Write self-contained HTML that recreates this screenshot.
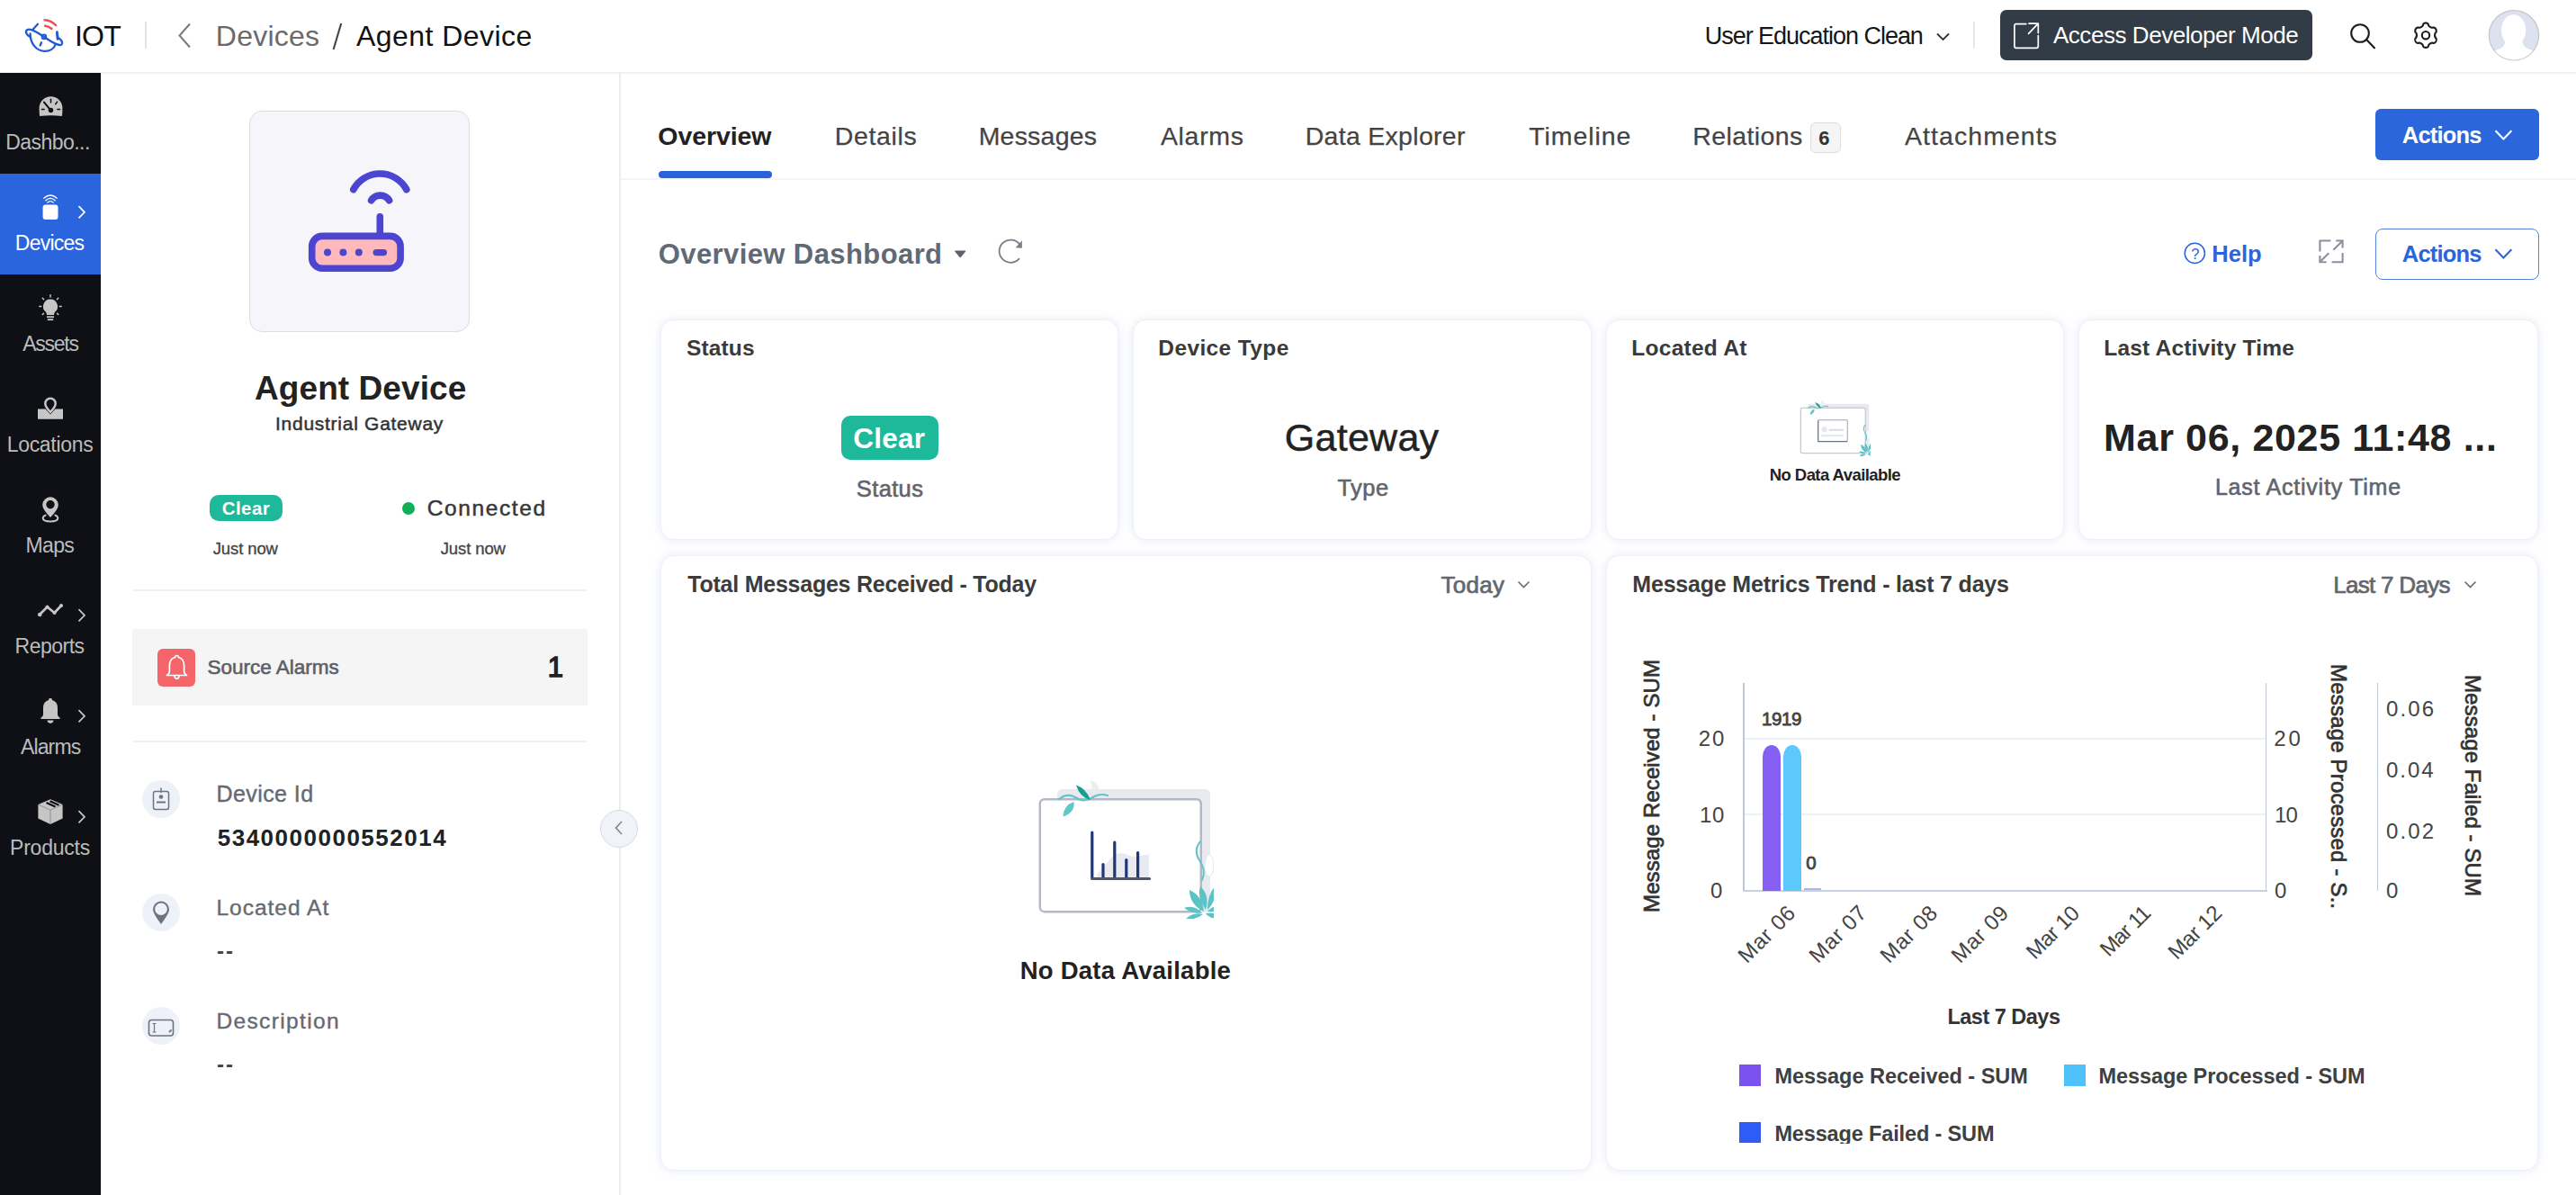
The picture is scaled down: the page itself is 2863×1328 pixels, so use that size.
<!DOCTYPE html>
<html><head><meta charset="utf-8"><title>IOT - Agent Device</title>
<style>
html,body{margin:0;padding:0;}
body{width:2863px;height:1328px;overflow:hidden;background:#fff;font-family:"Liberation Sans",sans-serif;position:relative;}
.a{position:absolute;box-sizing:border-box;}
.t{position:absolute;white-space:nowrap;line-height:1;font-family:"Liberation Sans",sans-serif;}
svg{position:absolute;overflow:visible;}
.card{position:absolute;box-sizing:border-box;background:#fff;border:1px solid #eef1f7;border-radius:15px;box-shadow:0 0 10px 1px rgba(214,222,238,.55);}
</style></head><body>
<div class="a" style="left:0px;top:0px;width:2863px;height:81px;background:#fff;"></div>
<div class="a" style="left:0px;top:80px;width:2863px;height:2px;background:#f1f2f5;"></div>
<svg style="left:20px;top:10px" width="60" height="60" viewBox="0 0 60 60">
<g fill="none" stroke-linecap="round" stroke-linejoin="round">
<path d="M29.600 12.200 Q37 12.600 42 18" stroke="#f04f55" stroke-width="2.500"/>
<path d="M30.100 18.700 Q34.500 19.200 37.500 22" stroke="#f04f55" stroke-width="2.500"/>
<path d="M16.300 23 L22 16.800" stroke="#2259d6" stroke-width="2.300"/>
<path d="M45 32.300 C50 35 50.500 40.800 46 40 C40 39 33.500 33.800 28.500 30.600 C22 26.400 14 21 10.500 23 C7.300 25 9.500 28.500 12.800 30.500" stroke="#2259d6" stroke-width="2.300"/>
<path d="M13.600 27.500 C13.600 38 20 46.300 29 46.800 C35.500 47.100 40.300 43.800 41.800 38.800" stroke="#2259d6" stroke-width="2.300"/>
<path d="M43.400 25.800 L44.100 33.300" stroke="#2259d6" stroke-width="2.900"/>
<circle cx="28.900" cy="30.900" r="2.300" stroke="#2259d6" stroke-width="2"/>
<path d="M25.900 37.300 L24.700 40.500" stroke="#2259d6" stroke-width="2.300"/>
</g></svg>
<span class="t" style="left:83.04px;top:24.00px;font-size:32px;letter-spacing:-0.800px;color:#111;">IOT</span>
<div class="a" style="left:161px;top:24px;width:2px;height:30px;background:#e2e2e6;"></div>
<svg style="left:196px;top:24px" width="18" height="32" viewBox="0 0 18 32"><path d="M15 2.5 L3.5 15.5 L15 28.5" fill="none" stroke="#7a7a7f" stroke-width="2"/></svg>
<span class="t" style="left:239.86px;top:24.00px;font-size:32px;letter-spacing:0.237px;color:#6a6a6e;">Devices</span>
<svg style="left:366px;top:24px" width="18" height="34" viewBox="0 0 18 34"><path d="M13.2 2 L4.6 31" fill="none" stroke="#444" stroke-width="2.1"/></svg>
<span class="t" style="left:395.92px;top:24.00px;font-size:32px;letter-spacing:0.465px;color:#111;">Agent Device</span>
<span class="t" style="left:1894.71px;top:27.00px;font-size:27px;letter-spacing:-1.024px;color:#161616;">User Education Clean</span>
<svg style="left:2151px;top:35px" width="18" height="12" viewBox="0 0 18 12"><path d="M2 2.5 L8.5 9 L15 2.5" fill="none" stroke="#333" stroke-width="1.8"/></svg>
<div class="a" style="left:2193px;top:24px;width:2px;height:30px;background:#e8e8ec;"></div>
<div class="a" style="left:2223px;top:11px;width:347px;height:56px;background:#323c47;border-radius:7px;"></div>
<svg style="left:2237px;top:24px" width="31" height="32" viewBox="0 0 31 32"><g fill="none" stroke="#fff" stroke-width="1.700" stroke-linecap="round" stroke-linejoin="round">
<path d="M14.800 2.600 H3.800 Q1.900 2.600 1.900 4.600 V27.300 Q1.900 29.300 3.800 29.300 H26.300 Q28.300 29.300 28.300 27.300 V15.600"/>
<path d="M17.600 13.400 L27.800 2.700 M18 2.200 H28.300 V12.600"/></g></svg>
<span class="t" style="left:2281.93px;top:26.00px;font-size:26px;letter-spacing:-0.445px;color:#fff;">Access Developer Mode</span>
<svg style="left:2610px;top:23.500px" width="32" height="32" viewBox="0 0 32 32"><g fill="none" stroke="#1c1c1c" stroke-width="2.100" stroke-linecap="round"><circle cx="13" cy="13" r="9.800"/><path d="M20.300 20.300 L29 29.300"/></g></svg>
<svg style="left:2680px;top:23px" width="32" height="33" viewBox="0 0 32 33"><g fill="none" stroke="#1c1c1c" stroke-width="2.100" stroke-linejoin="round">
<path d="M26.09 16.20 L26.09 16.48 L26.11 16.76 L26.15 17.04 L26.19 17.33 L26.25 17.62 L26.33 17.92 L26.42 18.23 L26.54 18.56 L26.71 18.90 L27.15 19.34 L27.57 19.80 L27.70 20.20 L27.77 20.58 L27.79 20.96 L27.78 21.33 L27.73 21.69 L27.65 22.04 L27.55 22.39 L27.41 22.72 L27.26 23.03 L27.07 23.34 L26.87 23.62 L26.64 23.89 L26.39 24.13 L26.11 24.36 L25.81 24.56 L25.49 24.73 L25.14 24.86 L24.75 24.93 L24.16 24.78 L23.58 24.60 L23.21 24.62 L22.88 24.68 L22.58 24.75 L22.29 24.83 L22.02 24.92 L21.76 25.02 L21.52 25.13 L21.28 25.25 L21.04 25.39 L20.82 25.53 L20.60 25.69 L20.38 25.86 L20.17 26.04 L19.96 26.25 L19.75 26.47 L19.54 26.71 L19.33 26.98 L19.13 27.31 L18.99 27.92 L18.82 28.54 L18.56 28.86 L18.28 29.11 L17.98 29.32 L17.66 29.49 L17.34 29.63 L17.01 29.73 L16.68 29.81 L16.34 29.85 L16.00 29.87 L15.66 29.85 L15.32 29.81 L14.99 29.73 L14.66 29.63 L14.34 29.49 L14.02 29.32 L13.72 29.11 L13.44 28.86 L13.18 28.54 L13.01 27.92 L12.87 27.31 L12.67 26.98 L12.46 26.71 L12.25 26.47 L12.04 26.25 L11.83 26.04 L11.62 25.86 L11.40 25.69 L11.18 25.53 L10.96 25.39 L10.72 25.25 L10.48 25.13 L10.24 25.02 L9.98 24.92 L9.71 24.83 L9.42 24.75 L9.12 24.68 L8.79 24.62 L8.42 24.60 L7.84 24.78 L7.25 24.93 L6.86 24.86 L6.51 24.73 L6.19 24.56 L5.89 24.36 L5.61 24.13 L5.36 23.89 L5.13 23.62 L4.93 23.34 L4.74 23.03 L4.59 22.72 L4.45 22.39 L4.35 22.04 L4.27 21.69 L4.22 21.33 L4.21 20.96 L4.23 20.58 L4.30 20.20 L4.43 19.80 L4.85 19.34 L5.29 18.90 L5.46 18.56 L5.58 18.23 L5.67 17.92 L5.75 17.62 L5.81 17.33 L5.85 17.04 L5.89 16.76 L5.91 16.48 L5.91 16.20 L5.91 15.92 L5.89 15.64 L5.85 15.36 L5.81 15.07 L5.75 14.78 L5.67 14.48 L5.58 14.17 L5.46 13.84 L5.29 13.50 L4.85 13.06 L4.43 12.60 L4.30 12.20 L4.23 11.82 L4.21 11.44 L4.22 11.07 L4.27 10.71 L4.35 10.36 L4.45 10.01 L4.59 9.68 L4.74 9.37 L4.93 9.06 L5.13 8.78 L5.36 8.51 L5.61 8.27 L5.89 8.04 L6.19 7.84 L6.51 7.67 L6.86 7.54 L7.25 7.47 L7.84 7.62 L8.42 7.80 L8.79 7.78 L9.12 7.72 L9.42 7.65 L9.71 7.57 L9.98 7.48 L10.24 7.38 L10.48 7.27 L10.72 7.15 L10.96 7.01 L11.18 6.87 L11.40 6.71 L11.62 6.54 L11.83 6.36 L12.04 6.15 L12.25 5.93 L12.46 5.69 L12.67 5.42 L12.87 5.09 L13.01 4.48 L13.18 3.86 L13.44 3.54 L13.72 3.29 L14.02 3.08 L14.34 2.91 L14.66 2.77 L14.99 2.67 L15.32 2.59 L15.66 2.55 L16.00 2.53 L16.34 2.55 L16.68 2.59 L17.01 2.67 L17.34 2.77 L17.66 2.91 L17.98 3.08 L18.28 3.29 L18.56 3.54 L18.82 3.86 L18.99 4.48 L19.13 5.09 L19.33 5.42 L19.54 5.69 L19.75 5.93 L19.96 6.15 L20.17 6.36 L20.38 6.54 L20.60 6.71 L20.82 6.87 L21.04 7.01 L21.28 7.15 L21.52 7.27 L21.76 7.38 L22.02 7.48 L22.29 7.57 L22.58 7.65 L22.88 7.72 L23.21 7.78 L23.58 7.80 L24.16 7.62 L24.75 7.47 L25.14 7.54 L25.49 7.67 L25.81 7.84 L26.11 8.04 L26.39 8.27 L26.64 8.51 L26.87 8.78 L27.07 9.06 L27.26 9.37 L27.41 9.68 L27.55 10.01 L27.65 10.36 L27.73 10.71 L27.78 11.07 L27.79 11.44 L27.77 11.82 L27.70 12.20 L27.57 12.60 L27.15 13.06 L26.71 13.50 L26.54 13.84 L26.42 14.17 L26.33 14.48 L26.25 14.78 L26.19 15.07 L26.15 15.36 L26.11 15.64 L26.09 15.92 z"/>
<circle cx="16" cy="16.200" r="4.200"/></g></svg>
<svg style="left:2765px;top:10px" width="58" height="58" viewBox="0 0 58 58"><defs><clipPath id="av"><circle cx="29" cy="29.300" r="27.300"/></clipPath></defs>
<circle cx="29" cy="29.300" r="27.600" fill="#dde2ee" stroke="#c6c7cc" stroke-width="1.300"/>
<g clip-path="url(#av)" fill="#fff"><ellipse cx="28.600" cy="23.500" rx="13.600" ry="17.300"/><path d="M19 36 Q19.500 42.500 11 45 Q5.500 46.500 3 52 V58 H55 V52 Q52.500 46.500 47 45 Q38.500 42.500 38.500 36 z"/></g></svg>
<div class="a" style="left:0px;top:81px;width:112px;height:1247px;background:#0f1015;"></div>
<div class="a" style="left:0px;top:193px;width:112px;height:112px;background:#2b65dd;"></div>
<span class="t" style="left:6.30px;top:147.00px;font-size:23px;letter-spacing:-0.559px;color:#bcbcbc;">Dashbo...</span>
<span class="t" style="left:16.80px;top:259.00px;font-size:23px;letter-spacing:-0.753px;color:#fff;">Devices</span>
<span class="t" style="left:25.24px;top:371.00px;font-size:23px;letter-spacing:-1.267px;color:#bcbcbc;">Assets</span>
<span class="t" style="left:7.70px;top:483.00px;font-size:23px;letter-spacing:-0.305px;color:#bcbcbc;">Locations</span>
<span class="t" style="left:28.50px;top:595.00px;font-size:23px;letter-spacing:-0.644px;color:#bcbcbc;">Maps</span>
<span class="t" style="left:16.60px;top:707.00px;font-size:23px;letter-spacing:-0.509px;color:#bcbcbc;">Reports</span>
<span class="t" style="left:22.94px;top:819.00px;font-size:23px;letter-spacing:-0.865px;color:#bcbcbc;">Alarms</span>
<span class="t" style="left:11.00px;top:931.00px;font-size:23px;letter-spacing:-0.213px;color:#bcbcbc;">Products</span>
<svg style="left:42.500px;top:107px" width="27" height="23.500" viewBox="0 0 28 25">
<path d="M1 23.5 Q0.300 22 0.300 14 A13.700 13.700 0 0 1 27.700 14 Q27.700 22 27 23.500 Q14 21.800 1 23.500 z" fill="#c6c6c6"/>
<g stroke="#0f1015" stroke-width="1.600" stroke-linecap="round"><path d="M14 3.500 V7.500"/><path d="M6 7 L13 15.500" stroke-width="2.2"/><path d="M21.500 6.500 L19.500 9.300"/><path d="M3.300 15.500 H6.200"/><path d="M21.800 15.500 H24.700"/></g>
<circle cx="14" cy="16.500" r="2.900" fill="#0f1015"/></svg>
<svg style="left:46px;top:215px" width="20" height="30" viewBox="0 0 20 30">
<rect x="1.600" y="12.600" width="16.900" height="16.400" rx="3" fill="#fff"/>
<g fill="none" stroke="#fff" stroke-width="1.300" stroke-linecap="round"><path d="M2.800 5.200 Q10 -1.300 17.200 5.200"/><path d="M4.800 7.700 Q10 3 15.200 7.700"/><path d="M6.900 10 Q10 7.200 13.100 10"/></g></svg>
<svg style="left:86px;top:227.5px" width="10" height="16" viewBox="0 0 10 16"><path d="M1.500 1.200 L8 7.800 L1.500 14.400" fill="none" stroke="#fff" stroke-width="1.700"/></svg>
<svg style="left:42px;top:327px" width="28" height="31" viewBox="0 0 28 31">
<path d="M14 5.500 A8 8 0 0 1 19.300 19.500 Q18 20.800 18 23 H10 Q10 20.800 8.700 19.500 A8 8 0 0 1 14 5.500 z" fill="#c6c6c6"/>
<rect x="10" y="24.300" width="8" height="1.800" fill="#c6c6c6"/><rect x="10.800" y="27.300" width="6.400" height="1.800" fill="#c6c6c6"/>
<g stroke="#c6c6c6" stroke-width="1.500" stroke-linecap="round"><path d="M14 0.800 V3"/><path d="M5.300 4.300 L6.600 5.800"/><path d="M22.700 4.300 L21.400 5.800"/><path d="M1.800 13.500 H3.800"/><path d="M24.200 13.500 H26.200"/><path d="M5.300 22.500 L6.500 21.200"/><path d="M22.700 22.500 L21.500 21.200"/></g></svg>
<svg style="left:41px;top:442px" width="30" height="25" viewBox="0 0 30 25">
<path d="M1 12.500 H9.500 L15 18.500 L20.500 12.500 H29 V23.800 H1 z" fill="#c6c6c6"/>
<path d="M15 0.800 A5.700 5.700 0 0 1 20.700 6.500 Q20.700 10 15 16 Q9.300 10 9.300 6.500 A5.700 5.700 0 0 1 15 0.800 z" fill="#0f1015" stroke="#c6c6c6" stroke-width="2.500"/>
<circle cx="15" cy="6.500" r="1" fill="none" stroke="#c6c6c6" stroke-width="0"/></svg>
<svg style="left:46px;top:551px" width="20" height="31" viewBox="0 0 20 31">
<path d="M10 1.300 A8.800 8.800 0 0 1 18.800 10.100 Q18.800 15.200 10 24 Q1.200 15.200 1.200 10.100 A8.800 8.800 0 0 1 10 1.300 z" fill="#c6c6c6"/>
<circle cx="10" cy="9.800" r="4.700" fill="#0f1015"/>
<path d="M4.600 21.600 Q1.700 22.700 1.700 24.700 Q1.700 28.400 10 28.400 Q18.300 28.400 18.300 24.700 Q18.300 22.700 15.400 21.600" fill="none" stroke="#c6c6c6" stroke-width="2" stroke-linecap="round"/></svg>
<svg style="left:41px;top:670px" width="30" height="17" viewBox="0 0 30 17">
<path d="M3 13 L11.500 4.500 L19.500 11 L27 3" fill="none" stroke="#c6c6c6" stroke-width="2.700" stroke-linejoin="round" stroke-linecap="round"/>
<circle cx="3.200" cy="13" r="2.300" fill="#c6c6c6"/><circle cx="11.500" cy="4.500" r="2" fill="#c6c6c6"/><circle cx="19.500" cy="11" r="2" fill="#c6c6c6"/><circle cx="27" cy="3" r="2" fill="#c6c6c6"/></svg>
<svg style="left:86px;top:676px" width="10" height="16" viewBox="0 0 10 16"><path d="M1.500 1.200 L8 7.800 L1.500 14.400" fill="none" stroke="#c6c6c6" stroke-width="1.700"/></svg>
<svg style="left:44px;top:775px" width="24" height="30" viewBox="0 0 24 30">
<path d="M12 0.800 Q14 0.800 14 3 Q20 4.500 20 12 V19 Q20 21.500 22.500 22.500 V24 H1.500 V22.500 Q4 21.500 4 19 V12 Q4 4.500 10 3 Q10 0.800 12 0.800 z" fill="#c6c6c6"/>
<path d="M8.500 25.500 H15.500 Q15 28.800 12 28.800 Q9 28.800 8.500 25.500 z" fill="#c6c6c6"/></svg>
<svg style="left:86px;top:788px" width="10" height="16" viewBox="0 0 10 16"><path d="M1.500 1.200 L8 7.800 L1.500 14.400" fill="none" stroke="#c6c6c6" stroke-width="1.700"/></svg>
<svg style="left:41px;top:887px" width="30" height="30" viewBox="0 0 30 30">
<path d="M15 1.200 L28.600 7 V22.600 L15 29 L1.400 22.600 V7 z" fill="#c6c6c6"/>
<path d="M1.400 7 L15 13.200 L28.600 7 M15 13.200 V29" fill="none" stroke="#0f1015" stroke-width="0.500" opacity="0.550"/>
<path d="M10.500 5 L20.500 9.400 M14.500 3.300 L24.500 7.700" stroke="#0f1015" stroke-width="2.200"/></svg>
<svg style="left:86px;top:900px" width="10" height="16" viewBox="0 0 10 16"><path d="M1.500 1.200 L8 7.800 L1.500 14.400" fill="none" stroke="#c6c6c6" stroke-width="1.700"/></svg>
<div class="a" style="left:688px;top:81px;width:2px;height:1247px;background:#e9edf4;"></div>
<div class="a" style="left:277px;top:123px;width:245px;height:246px;background:#f5f5fa;border:1px solid #dcdce2;border-radius:14px;"></div>
<svg style="left:340px;top:186px" width="120" height="120" viewBox="0 0 120 120">
<g fill="none" stroke="#4b45d1" stroke-width="7.600" stroke-linecap="round" stroke-linejoin="round">
<path d="M52.800 24.600 A33.500 33.500 0 0 1 111.800 24.600"/><path d="M72.600 36.800 A11.600 11.600 0 0 1 92.600 36.800"/>
<path d="M82.300 54.800 V76"/>
<rect x="6.700" y="76.400" width="98.400" height="35.900" rx="11.500" fill="#ffb8bc"/></g>
<g fill="#4b45d1"><circle cx="24" cy="94.600" r="4"/><circle cx="41.400" cy="94.600" r="4"/><circle cx="58.800" cy="94.600" r="4"/><rect x="74.500" y="90.900" width="15.600" height="7.400" rx="3.700"/></g></svg>
<span class="t" style="left:283.07px;top:413.00px;font-size:37px;letter-spacing:0.067px;color:#222;font-weight:bold;">Agent Device</span>
<span class="t" style="left:306.06px;top:460.00px;font-size:21px;letter-spacing:0.727px;color:#333;-webkit-text-stroke:0.5px #333;">Industrial Gateway</span>
<div class="a" style="left:233px;top:550px;width:81.2px;height:28.8px;background:#1eb99a;border-radius:10px;"></div>
<span class="t" style="left:246.68px;top:555.00px;font-size:20.5px;letter-spacing:0.457px;color:#fff;font-weight:bold;">Clear</span>
<div class="a" style="left:447px;top:557.5px;width:14px;height:14px;background:#0fb058;border-radius:50%;"></div>
<span class="t" style="left:474.77px;top:553.00px;font-size:24.5px;letter-spacing:1.600px;color:#383838;-webkit-text-stroke:0.5px #383838;">Connected</span>
<span class="t" style="left:236.72px;top:601.00px;font-size:18.5px;letter-spacing:-0.114px;color:#444;-webkit-text-stroke:0.3px #444;">Just now</span>
<span class="t" style="left:489.72px;top:601.00px;font-size:18.5px;letter-spacing:-0.114px;color:#444;-webkit-text-stroke:0.3px #444;">Just now</span>
<div class="a" style="left:147px;top:655px;width:506px;height:2px;background:#f0f0f2;"></div>
<div class="a" style="left:147px;top:699.3px;width:506px;height:84.5px;background:#f5f5f5;"></div>
<div class="a" style="left:175px;top:721px;width:42px;height:42px;background:#f4656a;border-radius:6px;"></div>
<svg style="left:182.500px;top:726px" width="27" height="31.500" viewBox="0 0 24 28"><g fill="none" stroke="#fff" stroke-width="1.500" stroke-linejoin="round" stroke-linecap="round">
<path d="M12 2.200 Q13.600 2.200 13.700 4 Q19.200 5.600 19.200 12 V17.500 Q19.200 20 21.800 21.800 H2.200 Q4.800 20 4.800 17.500 V12 Q4.800 5.600 10.300 4 Q10.400 2.200 12 2.200 z"/>
<path d="M9.800 22.500 Q9.800 25 12 25 Q14.200 25 14.200 22.500"/></g></svg>
<span class="t" style="left:230.49px;top:731.00px;font-size:22.5px;letter-spacing:-0.001px;color:#5c6066;-webkit-text-stroke:0.6px #5c6066;">Source Alarms</span>
<span class="t" style="left:608.67px;top:726.00px;font-size:31px;letter-spacing:0.000px;color:#222;-webkit-text-stroke:1.4px #222;">1</span>
<div class="a" style="left:147px;top:823px;width:506px;height:2px;background:#f0f0f2;"></div>
<div class="a" style="left:158px;top:867px;width:42px;height:42px;background:#eef1f7;border-radius:50%;"></div>
<div class="a" style="left:158px;top:993px;width:42px;height:42px;background:#eef1f7;border-radius:50%;"></div>
<div class="a" style="left:158px;top:1119px;width:42px;height:42px;background:#eef1f7;border-radius:50%;"></div>
<span class="t" style="left:240.44px;top:870.00px;font-size:25px;letter-spacing:0.430px;color:#666a72;-webkit-text-stroke:0.4px #666a72;">Device Id</span>
<span class="t" style="left:241.72px;top:918.00px;font-size:26px;letter-spacing:1.505px;color:#222;font-weight:bold;">5340000000552014</span>
<span class="t" style="left:240.48px;top:997.00px;font-size:24.5px;letter-spacing:0.994px;color:#666a72;-webkit-text-stroke:0.4px #666a72;">Located At</span>
<span class="t" style="left:241.04px;top:1045.00px;font-size:24px;letter-spacing:1.960px;color:#444;font-weight:bold;">--</span>
<span class="t" style="left:240.48px;top:1123.00px;font-size:24.5px;letter-spacing:1.355px;color:#666a72;-webkit-text-stroke:0.4px #666a72;">Description</span>
<span class="t" style="left:241.04px;top:1171.00px;font-size:24px;letter-spacing:1.960px;color:#444;font-weight:bold;">--</span>
<svg style="left:169px;top:875px" width="20" height="26" viewBox="0 0 20 26"><g fill="none" stroke="#6b7480" stroke-width="1.500" stroke-linejoin="round">
<rect x="1.500" y="4.500" width="17" height="20" rx="2.200"/><path d="M10 1 V5.500" stroke-linecap="round"/><path d="M5 16.500 H15" stroke-width="2"/></g><circle cx="10" cy="10.500" r="2.300" fill="#6b7480"/></svg>
<svg style="left:168px;top:1000px" width="22" height="30" viewBox="0 0 22 30">
<path d="M11 1.500 A9 9 0 0 1 20 10.500 Q20 15 11 27 Q2 15 2 10.500 A9 9 0 0 1 11 1.500 z" fill="#6b7480"/><circle cx="11" cy="10.200" r="6.800" fill="#eef1f7"/></svg>
<svg style="left:164px;top:1130.500px" width="30" height="22" viewBox="0 0 30 22"><g fill="none" stroke="#6b7480" stroke-width="1.600">
<rect x="1.500" y="2.500" width="27" height="17.500" rx="3"/><path d="M5.500 6.500 H9.500 M7.500 6.500 V16 M5.500 16 H9.500" stroke-width="1.200"/><path d="M24.500 15.500 L26 14" stroke-width="1.800" stroke-linecap="round"/></g></svg>
<div class="a" style="left:667px;top:899.5px;width:42px;height:42px;background:#f0f4f9;border:1px solid #d5dbe6;border-radius:50%;"></div>
<svg style="left:682px;top:911px" width="12" height="18" viewBox="0 0 12 18"><path d="M9 2 L2.500 9 L9 16" fill="none" stroke="#7b8494" stroke-width="1.600"/></svg>
<div class="a" style="left:690px;top:198px;width:2173px;height:2px;background:#f3f4f7;"></div>
<span class="t" style="left:731.36px;top:137.00px;font-size:28.5px;letter-spacing:-0.084px;color:#222;font-weight:bold;">Overview</span>
<div class="a" style="left:732px;top:190px;width:126px;height:7.5px;background:#2b62d9;border-radius:4px;"></div>
<span class="t" style="left:927.65px;top:137.00px;font-size:28.5px;letter-spacing:0.668px;color:#444;-webkit-text-stroke:0.25px #444;">Details</span>
<span class="t" style="left:1087.65px;top:137.00px;font-size:28.5px;letter-spacing:0.209px;color:#444;-webkit-text-stroke:0.25px #444;">Messages</span>
<span class="t" style="left:1289.93px;top:137.00px;font-size:28.5px;letter-spacing:0.672px;color:#444;-webkit-text-stroke:0.25px #444;">Alarms</span>
<span class="t" style="left:1450.65px;top:137.00px;font-size:28.5px;letter-spacing:0.298px;color:#444;-webkit-text-stroke:0.25px #444;">Data Explorer</span>
<span class="t" style="left:1699.36px;top:137.00px;font-size:28.5px;letter-spacing:0.895px;color:#444;-webkit-text-stroke:0.25px #444;">Timeline</span>
<span class="t" style="left:1881.25px;top:137.00px;font-size:28.5px;letter-spacing:0.400px;color:#444;-webkit-text-stroke:0.25px #444;">Relations</span>
<div class="a" style="left:2011.5px;top:135.7px;width:34.2px;height:34.7px;background:#f5f5f6;border:1px solid #dcdee4;border-radius:6px;"></div>
<span class="t" style="left:2021.17px;top:143.00px;font-size:22px;letter-spacing:0.000px;color:#333;font-weight:bold;">6</span>
<span class="t" style="left:2116.93px;top:137.00px;font-size:28.5px;letter-spacing:1.068px;color:#444;-webkit-text-stroke:0.25px #444;">Attachments</span>
<div class="a" style="left:2640px;top:121px;width:182px;height:57px;background:#2b66dc;border-radius:6px;"></div>
<span class="t" style="left:2669.86px;top:138.00px;font-size:25.5px;letter-spacing:-0.833px;color:#fff;font-weight:bold;">Actions</span>
<svg style="left:2772px;top:143px" width="24" height="16" viewBox="0 0 24 16"><path d="M1.500 2.200 L10.400 11.400 L19.300 2.200" fill="none" stroke="#fff" stroke-width="2.100"/></svg>
<span class="t" style="left:731.76px;top:267.00px;font-size:31px;letter-spacing:0.405px;color:#616975;font-weight:bold;">Overview Dashboard</span>
<svg style="left:1059px;top:277px" width="16" height="11" viewBox="0 0 16 11"><path d="M2.700 2.100 H13.700 L8.200 8.700 z" fill="#5d626b" stroke="#5d626b" stroke-width="1.200" stroke-linejoin="round"/></svg>
<svg style="left:1107px;top:264px" width="32" height="31" viewBox="0 0 32 31"><path d="M26.400 7.800 A12.600 12.600 0 1 0 25.600 23.600" fill="none" stroke="#7a808a" stroke-width="1.800" stroke-linecap="round"/>
<path d="M28.900 3.300 V11.700 L21.700 11.200 z" fill="#7a808a"/></svg>
<svg style="left:2427px;top:269px" width="25" height="25" viewBox="0 0 25 25"><circle cx="12.300" cy="12.400" r="11.100" fill="none" stroke="#2b65dd" stroke-width="1.500"/></svg>
<span class="t" style="left:2435.24px;top:274.00px;font-size:16.5px;letter-spacing:0.000px;color:#2b65dd;">?</span>
<span class="t" style="left:2458.28px;top:270.00px;font-size:25.5px;letter-spacing:0.011px;color:#2b65dd;font-weight:bold;">Help</span>
<svg style="left:2576px;top:265px" width="31" height="30" viewBox="0 0 31 30"><g fill="none" stroke="#8a919c" stroke-width="2.100" stroke-linejoin="miter">
<path d="M2.400 14.500 V2.500 H14.400"/><path d="M27.600 16 V26.200 H15.600"/>
<path d="M17.300 12.800 L27 3.200"/><path d="M20.200 2.500 H27.600 V10.600"/><path d="M12.300 16.300 L3 25.600"/><path d="M2.400 19 V26.200 H9.600"/></g></svg>
<div class="a" style="left:2640px;top:254px;width:182px;height:56.5px;background:#fff;border:1.500px solid #5583e3;border-radius:8px;"></div>
<span class="t" style="left:2669.86px;top:270.00px;font-size:25.5px;letter-spacing:-0.833px;color:#2b65dd;font-weight:bold;">Actions</span>
<svg style="left:2772px;top:275px" width="24" height="16" viewBox="0 0 24 16"><path d="M1.500 2.200 L10.400 11.400 L19.300 2.200" fill="none" stroke="#2b65dd" stroke-width="2.100"/></svg>
<div class="card" style="left:734px;top:355px;width:509px;height:245px"></div>
<div class="card" style="left:1259px;top:355px;width:510px;height:245px"></div>
<div class="card" style="left:1785px;top:355px;width:509px;height:245px"></div>
<div class="card" style="left:2310px;top:355px;width:511px;height:245px"></div>
<div class="card" style="left:734px;top:617px;width:1035px;height:684px"></div>
<div class="card" style="left:1785px;top:617px;width:1036px;height:684px"></div>
<span class="t" style="left:762.97px;top:375.00px;font-size:24.5px;letter-spacing:0.133px;color:#3a3a3a;font-weight:bold;">Status</span>
<span class="t" style="left:1287.35px;top:375.00px;font-size:24.5px;letter-spacing:0.377px;color:#3a3a3a;font-weight:bold;">Device Type</span>
<span class="t" style="left:1813.35px;top:375.00px;font-size:24.5px;letter-spacing:0.253px;color:#3a3a3a;font-weight:bold;">Located At</span>
<span class="t" style="left:2338.35px;top:375.00px;font-size:24.5px;letter-spacing:0.185px;color:#3a3a3a;font-weight:bold;">Last Activity Time</span>
<div class="a" style="left:935px;top:461.5px;width:108px;height:49px;background:#1eb99a;border-radius:10px;"></div>
<span class="t" style="left:948.24px;top:472.00px;font-size:31.5px;letter-spacing:0.226px;color:#fff;font-weight:bold;">Clear</span>
<span class="t" style="left:951.85px;top:531.00px;font-size:25.5px;letter-spacing:0.350px;color:#61656d;-webkit-text-stroke:0.6px #61656d;">Status</span>
<span class="t" style="left:1427.85px;top:465.00px;font-size:43px;letter-spacing:0.253px;color:#222;-webkit-text-stroke:0.5px #222;">Gateway</span>
<span class="t" style="left:1486.43px;top:530.00px;font-size:25.5px;letter-spacing:0.462px;color:#61656d;-webkit-text-stroke:0.6px #61656d;">Type</span>
<span class="t" style="left:1966.75px;top:519.00px;font-size:18.5px;letter-spacing:-0.565px;color:#222;font-weight:bold;">No Data Available</span>
<span class="t" style="left:2338.10px;top:465.00px;font-size:43px;letter-spacing:0.652px;color:#222;font-weight:bold;">Mar 06, 2025 11:48 ...</span>
<span class="t" style="left:2461.94px;top:529.00px;font-size:25px;letter-spacing:0.768px;color:#61656d;-webkit-text-stroke:0.6px #61656d;">Last Activity Time</span>
<span class="t" style="left:764.25px;top:637.00px;font-size:25px;letter-spacing:-0.237px;color:#3c3c3c;font-weight:bold;">Total Messages Received - Today</span>
<span class="t" style="left:1601.41px;top:637.00px;font-size:26px;letter-spacing:0.324px;color:#63676d;-webkit-text-stroke:0.7px #63676d;">Today</span>
<svg style="left:1685px;top:644px" width="18" height="12" viewBox="0 0 18 12"><path d="M2.500 2.500 L8.500 8.500 L14.500 2.500" fill="none" stroke="#666b74" stroke-width="1.600"/></svg>
<span class="t" style="left:1814.31px;top:637.00px;font-size:25px;letter-spacing:-0.191px;color:#3c3c3c;font-weight:bold;">Message Metrics Trend - last 7 days</span>
<span class="t" style="left:2593.36px;top:637.00px;font-size:26px;letter-spacing:-0.722px;color:#63676d;-webkit-text-stroke:0.7px #63676d;">Last 7 Days</span>
<svg style="left:2737px;top:644px" width="18" height="12" viewBox="0 0 18 12"><path d="M2.500 2.500 L8.500 8.500 L14.500 2.500" fill="none" stroke="#666b74" stroke-width="1.600"/></svg>
<span class="t" style="left:1133.64px;top:1065.00px;font-size:27.5px;letter-spacing:0.250px;color:#222;font-weight:bold;">No Data Available</span>
<div class="a" style="left:1938px;top:820.4px;width:581px;height:2px;background:#edf0f6;"></div>
<div class="a" style="left:1938px;top:904.4px;width:581px;height:2px;background:#edf0f6;"></div>
<div class="a" style="left:1937px;top:759px;width:1.8px;height:231px;background:#bfc8d9;"></div>
<div class="a" style="left:2517.7px;top:759px;width:1.8px;height:231px;background:#bfc8d9;"></div>
<div class="a" style="left:2641.7px;top:759px;width:1.8px;height:231px;background:#bfc8d9;"></div>
<div class="a" style="left:1937px;top:988.8px;width:582.5px;height:1.9px;background:#c9d1df;"></div>
<div class="a" style="left:1958.8px;top:827.5px;width:20.4px;height:162px;background:#8560f2;border-radius:10.200px 10.200px 0 0 / 13px 13px 0 0;"></div>
<div class="a" style="left:1981.7px;top:827.5px;width:20.2px;height:162px;background:#5cc8fc;border-radius:10.100px 10.100px 0 0 / 13px 13px 0 0;"></div>
<div class="a" style="left:2004.6px;top:987.3px;width:19px;height:2px;background:#a8b8f6;"></div>
<span class="t" style="left:1957.96px;top:789.00px;font-size:20.5px;letter-spacing:-0.367px;color:#444;-webkit-text-stroke:0.8px #444;">1919</span>
<span class="t" style="left:2007.18px;top:949.00px;font-size:20.5px;letter-spacing:0.000px;color:#444;-webkit-text-stroke:0.8px #444;">0</span>
<span class="t" style="left:1887.80px;top:809.00px;font-size:24px;letter-spacing:1.860px;color:#444;">20</span>
<span class="t" style="left:1888.90px;top:894.00px;font-size:24px;letter-spacing:0.760px;color:#444;">10</span>
<span class="t" style="left:1901.04px;top:978.00px;font-size:24px;letter-spacing:0.000px;color:#444;">0</span>
<span class="t" style="left:2527.20px;top:809.00px;font-size:24px;letter-spacing:3.060px;color:#444;">20</span>
<span class="t" style="left:2527.90px;top:894.00px;font-size:24px;letter-spacing:-0.640px;color:#444;">10</span>
<span class="t" style="left:2528.04px;top:978.00px;font-size:24px;letter-spacing:0.000px;color:#444;">0</span>
<span class="t" style="left:2652.04px;top:776.00px;font-size:24px;letter-spacing:2.100px;color:#444;">0.06</span>
<span class="t" style="left:2652.04px;top:844.00px;font-size:24px;letter-spacing:1.980px;color:#444;">0.04</span>
<span class="t" style="left:2652.04px;top:912.00px;font-size:24px;letter-spacing:2.160px;color:#444;">0.02</span>
<span class="t" style="left:2652.04px;top:978.00px;font-size:24px;letter-spacing:0.000px;color:#444;">0</span>
<div class="a" style="left:1844px;top:1012px;width:0;height:0;transform:rotate(-90deg);"><span class="t" style="left:-1.98px;top:-20px;font-size:24px;letter-spacing:0.105px;color:#333;-webkit-text-stroke:0.7px #333;">Message Received - SUM</span></div>
<div class="a" style="left:2590.5px;top:739.7px;width:0;height:0;transform:rotate(90deg);"><span class="t" style="left:-1.98px;top:-20px;font-size:24px;letter-spacing:0.182px;color:#333;-webkit-text-stroke:0.7px #333;">Message Processed - S..</span></div>
<div class="a" style="left:2739.5px;top:751.8px;width:0;height:0;transform:rotate(90deg);"><span class="t" style="left:-1.98px;top:-20px;font-size:24px;letter-spacing:0.099px;color:#333;-webkit-text-stroke:0.7px #333;">Message Failed - SUM</span></div>
<div class="a" style="left:1995.5px;top:1016.5px;width:0;height:0;transform:rotate(-45deg);"><span class="t" style="left:-76.98px;top:-20px;font-size:24px;letter-spacing:0.672px;color:#444;">Mar 06</span></div>
<div class="a" style="left:2074.5px;top:1016.5px;width:0;height:0;transform:rotate(-45deg);"><span class="t" style="left:-76.98px;top:-20px;font-size:24px;letter-spacing:0.708px;color:#444;">Mar 07</span></div>
<div class="a" style="left:2153.5px;top:1016.5px;width:0;height:0;transform:rotate(-45deg);"><span class="t" style="left:-76.98px;top:-20px;font-size:24px;letter-spacing:0.672px;color:#444;">Mar 08</span></div>
<div class="a" style="left:2232.5px;top:1016.5px;width:0;height:0;transform:rotate(-45deg);"><span class="t" style="left:-76.98px;top:-20px;font-size:24px;letter-spacing:0.684px;color:#444;">Mar 09</span></div>
<div class="a" style="left:2311.5px;top:1016.5px;width:0;height:0;transform:rotate(-45deg);"><span class="t" style="left:-70.98px;top:-20px;font-size:24px;letter-spacing:-0.552px;color:#444;">Mar 10</span></div>
<div class="a" style="left:2390.5px;top:1016.5px;width:0;height:0;transform:rotate(-45deg);"><span class="t" style="left:-66.98px;top:-20px;font-size:24px;letter-spacing:-0.956px;color:#444;">Mar 11</span></div>
<div class="a" style="left:2469.5px;top:1016.5px;width:0;height:0;transform:rotate(-45deg);"><span class="t" style="left:-71.48px;top:-20px;font-size:24px;letter-spacing:-0.392px;color:#444;">Mar 12</span></div>
<span class="t" style="left:2164.41px;top:1119.00px;font-size:23.5px;letter-spacing:-0.507px;color:#333;font-weight:bold;">Last 7 Days</span>
<div class="a" style="left:1933px;top:1183.4px;width:24px;height:23.8px;background:#7b52ee;"></div>
<span class="t" style="left:1972.41px;top:1185.00px;font-size:23.5px;letter-spacing:-0.034px;color:#404040;font-weight:bold;">Message Received - SUM</span>
<div class="a" style="left:2294px;top:1183.4px;width:24px;height:23.8px;background:#4fc1fb;"></div>
<span class="t" style="left:2332.41px;top:1185.00px;font-size:23.5px;letter-spacing:-0.077px;color:#404040;font-weight:bold;">Message Processed - SUM</span>
<div class="a" style="left:1933px;top:1247.2px;width:24px;height:23.3px;background:#2f5cf5;"></div>
<div class="a" style="left:1960px;top:1240px;width:300px;height:30.500px;overflow:hidden;">
<span class="t" style="left:12.41px;top:9.00px;font-size:23.5px;letter-spacing:-0.142px;color:#404040;font-weight:bold;">Message Failed - SUM</span>
</div>
<svg style="left:1149.5px;top:864.5px;overflow:hidden" width="199.30" height="156.00" viewBox="0 0 199.300 156">
<rect x="25" y="12" width="170" height="137" rx="5" fill="#e8eaf0"/>
<path d="M62 2 Q70 4 72 13 L64 13 z" fill="#eceef2"/>
<ellipse cx="194" cy="97" rx="5" ry="12" fill="#fff" stroke="#e3e5ea" stroke-width="1"/>
<rect x="5.800" y="23.200" width="179" height="125" rx="5" fill="#fff" stroke="#b4b7c4" stroke-width="2.4"/>
<path d="M69 107 L76 99 L87 86 Q93 82 99 83.500 L110 87.500 L121 85.500 L127 84.500 V110 H69 z" fill="#e8eaf0"/>
<g stroke="#1f3777" stroke-width="3.200" stroke-linecap="round"><path d="M63.800 60 V111"/><path d="M76 95.500 V110"/><path d="M88.800 71 V110"/><path d="M101.800 90.500 V110"/><path d="M114.600 82.500 V110"/></g>
<path d="M63.800 111.500 H127.500" stroke="#4d566b" stroke-width="3.200" stroke-linecap="round"/>
<path d="M27 23 Q36 16 45 21 Q54 27 63 22 Q72 16 81 19" fill="none" stroke="#5fc7c8" stroke-width="2.2" stroke-linecap="round"/>
<path d="M46 7.500 Q57 11 62 24 Q50 21 46 7.500 z" fill="#179e8c"/>
<path d="M43.500 26 Q45 38 31.500 42.500 Q32 30 43.500 26 z" fill="#5fc7c8"/>
<path d="M184 70 Q176 80 183 91 Q191 102 186 113" fill="none" stroke="#5fc7c8" stroke-width="2.0" stroke-linecap="round"/>
<g fill="#5cc3c5"><path d="M188 148 Q172 140 172 124 Q186 130 188 148 z"/><path d="M190 146 Q180 132 184 120 Q195 130 190 146 z"/><path d="M192 146 Q192 130 200 120 Q203 136 192 146 z"/>
<path d="M186 150 Q174 150 166 144 Q178 140 186 150 z"/><path d="M187 151 Q178 158 168 156 Q176 148 187 151 z"/><path d="M190 150 Q200 148 206 154 Q196 158 190 150 z"/><path d="M192 148 Q200 140 207 141 Q204 150 192 148 z"/></g>
</svg>
<svg style="left:1998.9px;top:444.3px;overflow:hidden" width="80.12" height="62.71" viewBox="0 0 199.300 156">
<rect x="25" y="12" width="170" height="137" rx="5" fill="#e8eaf0"/>
<path d="M62 2 Q70 4 72 13 L64 13 z" fill="#eceef2"/>
<ellipse cx="194" cy="97" rx="5" ry="12" fill="#fff" stroke="#e3e5ea" stroke-width="1"/>
<rect x="5.800" y="23.200" width="179" height="125" rx="5" fill="#fff" stroke="#c4c8d5" stroke-width="3.12"/>
<rect x="54" y="56.500" width="81" height="59" rx="2" fill="#fff" stroke="#a3a7b3" stroke-width="2.600"/>
<path d="M54 58 V116 H135" fill="none" stroke="#6a7288" stroke-width="2.600"/>
<circle cx="71" cy="83" r="7.500" fill="#e4e6ea"/><path d="M84 84 H124" stroke="#d9dce3" stroke-width="5"/><path d="M62 100 H124" stroke="#e3e7ef" stroke-width="5"/>
<path d="M27 23 Q36 16 45 21 Q54 27 63 22 Q72 16 81 19" fill="none" stroke="#5fc7c8" stroke-width="2.8600000000000003" stroke-linecap="round"/>
<path d="M46 7.500 Q57 11 62 24 Q50 21 46 7.500 z" fill="#179e8c"/>
<path d="M43.500 26 Q45 38 31.500 42.500 Q32 30 43.500 26 z" fill="#5fc7c8"/>
<path d="M184 70 Q176 80 183 91 Q191 102 186 113" fill="none" stroke="#5fc7c8" stroke-width="2.6" stroke-linecap="round"/>
<g fill="#5cc3c5"><path d="M188 148 Q172 140 172 124 Q186 130 188 148 z"/><path d="M190 146 Q180 132 184 120 Q195 130 190 146 z"/><path d="M192 146 Q192 130 200 120 Q203 136 192 146 z"/>
<path d="M186 150 Q174 150 166 144 Q178 140 186 150 z"/><path d="M187 151 Q178 158 168 156 Q176 148 187 151 z"/><path d="M190 150 Q200 148 206 154 Q196 158 190 150 z"/><path d="M192 148 Q200 140 207 141 Q204 150 192 148 z"/></g>
</svg>
</body></html>
